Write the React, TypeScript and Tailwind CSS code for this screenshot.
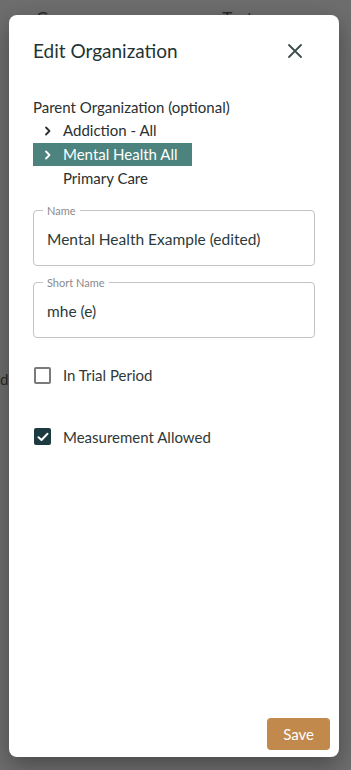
import React from "react";

const TreeItem = ({
  label,
  hasChildren,
  selected,
}: {
  label: string;
  hasChildren?: boolean;
  selected?: boolean;
}) => {
  return (
    <div
      className={
        "flex h-[23px] w-fit items-center pr-[14px] " +
        (selected ? "bg-[#4c837e] text-white" : "text-[#2a2f2f]")
      }
    >
      <span className="flex w-[30px] justify-center">
        {hasChildren && (
          <svg width="8" height="10" viewBox="0 0 8 10" fill="none">
            <path
              d="M2 1.5 L5.5 5 L2 8.5"
              stroke="currentColor"
              strokeWidth="1.8"
              strokeLinecap="round"
              strokeLinejoin="round"
            />
          </svg>
        )}
      </span>
      <span className="text-[15px] leading-none">{label}</span>
    </div>
  );
};

const OutlinedField = ({ label, value }: { label: string; value: string }) => {
  return (
    <fieldset className="h-[61px] rounded-[4px] border border-[#c4c4c4] px-[9px] pb-0">
      <legend className="px-[4px] text-[11px] leading-none text-[#8a8a8a]">{label}</legend>
      <div className="mt-[12px] pl-[4px] text-[15.5px] text-[#2b3b3b]">{value}</div>
    </fieldset>
  );
};

const Check = ({ label, checked }: { label: string; checked?: boolean }) => {
  return (
    <div className="flex items-center">
      {checked ? (
        <span className="ml-[1px] flex h-[17px] w-[17px] items-center justify-center rounded-[2px] bg-[#1c3a40]">
          <svg width="12" height="10" viewBox="0 0 12 10" fill="none">
            <path
              d="M1.5 5.2 L4.5 8 L10.5 1.8"
              stroke="white"
              strokeWidth="2"
              strokeLinecap="round"
              strokeLinejoin="round"
            />
          </svg>
        </span>
      ) : (
        <span className="ml-[1px] h-[17px] w-[17px] rounded-[2px] border-2 border-[#7a7a7a]" />
      )}
      <span className="ml-[12px] text-[15px] text-[#2f3838]">{label}</span>
    </div>
  );
};

export default function App() {
  return (
    <div className="relative h-[770px] w-full overflow-hidden bg-[#6f6e6e] font-['Lato',sans-serif]">
      {/* page behind the overlay */}
      <div className="flex gap-[95px] px-[36px] pt-[6px] text-[17px] text-[#2a2a2a]">
        <span>Group Name</span>
        <span>Test Hospital</span>
      </div>
      <div className="mt-[311px] text-[15px] text-[#2a2a2a]">d (</div>

      {/* dialog */}
      <div className="absolute left-[9px] top-[15px] flex h-[742px] w-[330px] flex-col rounded-[8px] bg-white px-[24px] shadow-[0_8px_24px_rgba(0,0,0,0.35)]">
        <div className="mt-[22px] flex items-center justify-between">
          <h2 className="text-[19px] text-[#1f3434]">Edit Organization</h2>
          <button className="mr-[12px] text-[#3c4c4c]">
            <svg width="16" height="16" viewBox="0 0 16 16" fill="none">
              <path d="M2 2 L14 14 M14 2 L2 14" stroke="currentColor" strokeWidth="1.8" strokeLinecap="round" />
            </svg>
          </button>
        </div>

        <div className="mt-[30px] text-[15px] text-[#2a2f2f]">Parent Organization (optional)</div>
        <div className="mt-[1px] flex flex-col gap-[1px]">
          <TreeItem label="Addiction - All" hasChildren />
          <TreeItem label="Mental Health All" hasChildren selected />
          <TreeItem label="Primary Care" />
        </div>

        <div className="mt-[15px] flex flex-col gap-[11px]">
          <OutlinedField label="Name" value="Mental Health Example (edited)" />
          <OutlinedField label="Short Name" value="mhe (e)" />
        </div>

        <div className="mt-[26px] flex flex-col gap-[39px]">
          <Check label="In Trial Period" />
          <Check label="Measurement Allowed" checked />
        </div>

        <div className="-mr-[15px] mt-auto mb-[7px] flex justify-end">
          <button className="h-[32px] rounded-[4px] bg-[#c2894c] px-[16px] text-[15px] text-white">Save</button>
        </div>
      </div>
    </div>
  );
}
